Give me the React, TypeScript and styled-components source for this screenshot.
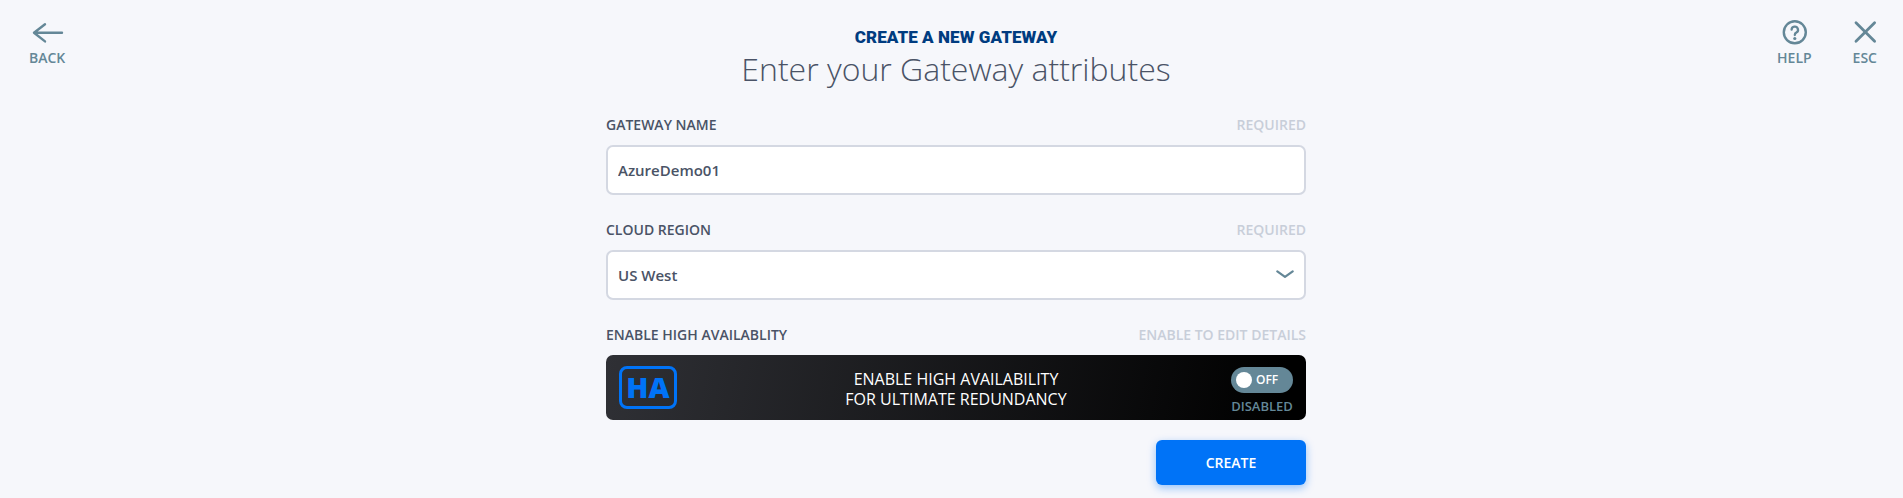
import React, { useState } from "react";
import styled, { createGlobalStyle } from "styled-components";

const GlobalStyle = createGlobalStyle`
  * { box-sizing: border-box; }
  body {
    margin: 0;
    background: #f6f7fb;
    color: #4a5366;
    font-family: "Open Sans", sans-serif;
    overflow: hidden;
  }
  button, input { font-family: inherit; }
`;

const Page = styled.div`
  display: grid;
  grid-template-columns: 606px 700px 1fr;
  height: 498px;
`;

const Side = styled.nav<{ $end?: boolean }>`
  display: flex;
  align-items: flex-start;
  justify-content: ${(p) => (p.$end ? "flex-end" : "flex-start")};
  gap: 41px;
  padding: 17px ${(p) => (p.$end ? "26px" : "0")} 0 29px;
`;

const NavButton = styled.button`
  display: flex;
  flex-direction: column;
  align-items: center;
  padding: 0;
  border: 0;
  background: none;
  color: #648797;
  font-size: 14px;
  font-weight: 600;
  line-height: 20px;
  cursor: pointer;

  svg {
    height: 30px;
    margin-bottom: 1px;
    overflow: visible;
  }
`;

const Main = styled.main`
  display: flex;
  flex-direction: column;
`;

const Header = styled.header`
  height: 115px;
  padding-top: 26px;
  text-align: center;
`;

const Eyebrow = styled.h2`
  margin: 0;
  color: #003c80;
  font-family: Roboto, sans-serif;
  font-size: 17px;
  font-weight: 900;
  line-height: 22px;
  letter-spacing: 0.08px;
`;

const Title = styled.h1`
  margin: 0;
  font-size: 32px;
  font-weight: 300;
  line-height: 42px;
`;

const Field = styled.section`
  margin-bottom: 20px;
`;

const LabelRow = styled.div`
  display: flex;
  justify-content: space-between;
  height: 30px;
  font-size: 14px;
  font-weight: 600;
  line-height: 20px;
`;

const Hint = styled.span`
  color: #c8ced9;
`;

const Control = styled.div`
  display: flex;
  align-items: center;
  justify-content: space-between;
  height: 50px;
  margin-bottom: 25px;
  padding: 0 10px;
  border: 2px solid #d4d8e2;
  border-radius: 7px;
  background: #fff;
`;

const TextInput = styled.input`
  flex: 1;
  padding: 0;
  border: 0;
  outline: 0;
  background: none;
  color: #4a5366;
  font-size: 15px;
  font-weight: 600;
`;

const SelectValue = styled.span`
  font-size: 15px;
  font-weight: 600;
`;

const Card = styled.div`
  display: grid;
  grid-template-columns: 62px 1fr 62px;
  height: 65px;
  padding: 11px 13px;
  border-radius: 7px;
  background: linear-gradient(100deg, #2f3035 0%, #000 96%);
`;

const HaBadge = styled.div`
  display: flex;
  align-items: center;
  justify-content: center;
  width: 58px;
  height: 43px;
  padding-bottom: 1px;
  border: 3px solid #0073f7;
  border-radius: 8px;
  color: #0073f7;
  font-size: 29px;
  font-weight: 800;
  line-height: 36px;
`;

const CardText = styled.p`
  margin: 3px 0 0;
  color: #fff;
  font-size: 16px;
  line-height: 20px;
  text-align: center;
`;

const ToggleColumn = styled.div`
  display: flex;
  flex-direction: column;
  align-items: center;
  color: #648797;
  font-size: 13px;
  font-weight: 600;
  line-height: 18px;
`;

const Toggle = styled.button<{ $on: boolean }>`
  display: flex;
  flex-direction: ${(p) => (p.$on ? "row-reverse" : "row")};
  align-items: center;
  gap: 4px;
  width: 62px;
  height: 26px;
  margin: 1px 0 4px;
  padding: 0 5px;
  border: 0;
  border-radius: 13px;
  background: ${(p) => (p.$on ? "#0073f7" : "#648797")};
  color: #fff;
  font-size: 12px;
  font-weight: 600;
  line-height: 16px;
  cursor: pointer;
`;

const Knob = styled.span`
  width: 16px;
  height: 16px;
  border-radius: 50%;
  background: #fff;
`;

const CreateButton = styled.button`
  align-self: flex-end;
  width: 150px;
  height: 45px;
  border: 0;
  border-radius: 6px;
  background: #0073f7;
  box-shadow: 0 3px 8px rgba(0, 115, 247, 0.4);
  color: #fff;
  font-size: 14px;
  font-weight: 600;
  cursor: pointer;
`;

const stroke = {
  fill: "none",
  stroke: "currentColor",
  strokeWidth: 2.4,
  strokeLinecap: "round" as const,
  strokeLinejoin: "round" as const,
};

const BackIcon = () => (
  <svg width="32" height="30" viewBox="0 0 32 30" {...stroke}>
    <path d="M31 15.8H3M14 7.3L3 15.8l11 8.6" />
  </svg>
);

const HelpIcon = () => (
  <svg width="26" height="30" viewBox="-0.8 0 26 30" {...stroke}>
    <circle cx="13" cy="15.3" r="11" />
    <path d="M9.8 12.7a3.2 3.2 0 1 1 4.7 2.9Q13 16.3 13 18" strokeWidth="2.3" />
    <circle cx="13" cy="21.5" r="1.6" fill="currentColor" stroke="none" />
  </svg>
);

const CloseIcon = () => (
  <svg width="22" height="30" viewBox="0 0 22 30" {...stroke}>
    <path d="M2 5.8l18.6 18.4M20.6 5.8L2 24.2" strokeWidth="2.8" />
  </svg>
);

const ChevronIcon = () => (
  <svg width="18" height="10" viewBox="0 0 18 10" color="#648797" {...stroke} strokeWidth={2.2}>
    <path d="M1.3 1.3L9 6.9l7.7-5.6" />
  </svg>
);

export default function App() {
  const [name, setName] = useState("AzureDemo01");
  const [on, setOn] = useState(false);

  return (
    <>
      <GlobalStyle />
      <Page>
        <Side>
          <NavButton><BackIcon />BACK</NavButton>
        </Side>
        <Main>
          <Header>
            <Eyebrow>CREATE A NEW GATEWAY</Eyebrow>
            <Title>Enter your Gateway attributes</Title>
          </Header>
          <LabelRow><span>GATEWAY NAME</span><Hint>REQUIRED</Hint></LabelRow>
          <Control>
            <TextInput value={name} onChange={(e) => setName(e.target.value)} />
          </Control>
          <LabelRow><span>CLOUD REGION</span><Hint>REQUIRED</Hint></LabelRow>
          <Control>
            <SelectValue>US West</SelectValue>
            <ChevronIcon />
          </Control>
          <Field>
            <LabelRow>
              <span>ENABLE HIGH AVAILABLITY</span>
              <Hint>ENABLE TO EDIT DETAILS</Hint>
            </LabelRow>
            <Card>
              <HaBadge>HA</HaBadge>
              <CardText>ENABLE HIGH AVAILABILITY<br />FOR ULTIMATE REDUNDANCY</CardText>
              <ToggleColumn>
                <Toggle $on={on} onClick={() => setOn(!on)}>
                  <Knob />{on ? "ON" : "OFF"}
                </Toggle>
                {on ? "ENABLED" : "DISABLED"}
              </ToggleColumn>
            </Card>
          </Field>
          <CreateButton>CREATE</CreateButton>
        </Main>
        <Side $end>
          <NavButton><HelpIcon />HELP</NavButton>
          <NavButton><CloseIcon />ESC</NavButton>
        </Side>
      </Page>
    </>
  );
}
